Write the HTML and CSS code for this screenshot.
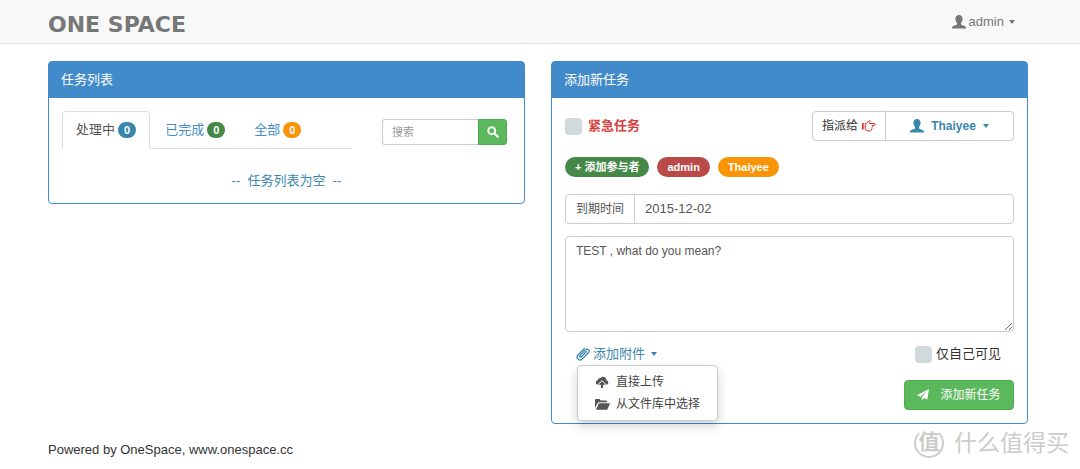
FILE: index.html
```html
<!DOCTYPE html>
<html lang="zh-CN">
<head>
<meta charset="utf-8">
<meta name="viewport" content="width=device-width, initial-scale=1">
<title>One Space</title>
<link rel="stylesheet" href="styles.css">
</head>
<body>
<svg class="sprite" aria-hidden="true">
  <symbol id="user" viewBox="0 0 14 14"><path d="M7 0c2.300 0 3.700 1.700 3.600 4-.1 1.800-.8 3-1.600 3.900v1.300c.3 1 4.800 1.400 5 3.300v1H0v-1c.2-1.900 4.700-2.300 5-3.300V7.900C4.200 7 3.500 5.800 3.400 4 3.300 1.700 4.700 0 7 0z"/></symbol>
</svg>

<header class="navbar">
  <a class="brand" href="#">ONE SPACE</a>
  <button class="account" type="button"><svg class="icon-md"><use href="#user"/></svg><span>admin</span><i class="caret"></i></button>
</header>

<main class="columns">
  <section class="panel">
    <h2 class="panel-heading">任务列表</h2>
    <div class="panel-body">
      <div class="list-bar">
        <nav class="tabs">
          <a class="tab active" href="#">处理中<span class="badge info">0</span></a>
          <a class="tab" href="#">已完成<span class="badge success">0</span></a>
          <a class="tab" href="#">全部<span class="badge warning">0</span></a>
        </nav>
        <form class="search">
          <input class="search-input" type="text" placeholder="搜索" aria-label="搜索">
          <button class="search-button" type="button" aria-label="搜索"><svg class="icon-sm" viewBox="0 0 12 12"><circle cx="4.700" cy="4.700" r="3.500" fill="none" stroke="currentColor" stroke-width="1.900"/><path d="M7.300 7.300L10.800 10.800" stroke="currentColor" stroke-width="2.200" stroke-linecap="round"/></svg></button>
        </form>
      </div>
      <p class="empty">--&nbsp; 任务列表为空 &nbsp;--</p>
    </div>
  </section>

  <section class="panel">
    <h2 class="panel-heading">添加新任务</h2>
    <form class="panel-body">
      <div class="row">
        <label class="check urgent"><input class="checkbox" type="checkbox"><span>紧急任务</span></label>
        <div class="assign">
          <button class="assign-label" type="button">指派给<svg class="hand" viewBox="0 0 14 12"><path d="M0 3h1.700v6.500H0z" fill="currentColor"/><path d="M3.200 3.500H4.500L6.700.9C7.500.2 8.600 1.200 8 2.200L7.300 3.500H12.300C13.700 3.500 13.700 5.400 12.300 5.400H10C11 6 10.700 7.100 9.900 7.400 10.500 8.100 10 9 9.300 9.200 9.500 10.300 9 10.900 8 10.900H6.200C5.200 10.900 4.500 9.800 3.200 9.800z" fill="none" stroke="currentColor" stroke-linejoin="round"/></svg></button>
          <button class="assign-user" type="button"><svg class="icon-md"><use href="#user"/></svg><span>Thaiyee</span><i class="caret"></i></button>
        </div>
      </div>
      <div class="tags">
        <button class="tag success" type="button">+ 添加参与者</button>
        <span class="tag danger">admin</span>
        <span class="tag warning">Thaiyee</span>
      </div>
      <div class="field">
        <label class="addon" for="due">到期时间</label>
        <input class="date" id="due" type="text" value="2015-12-02">
      </div>
      <textarea class="details" aria-label="任务内容">TEST , what do you mean?</textarea>
      <div class="row options">
        <div class="attach">
          <button class="attach-toggle" type="button"><svg class="icon-md clip" viewBox="0 0 14 14"><path d="M10.500 4.500L5.400 9.700C4.300 10.800 3 9.500 4 8.400L9.500 2.900C11.500.9 14.500 3.500 12.400 5.800L6.300 11.900C3.200 14.700-.6 11 2 8L8.300 1.700" fill="none" stroke="currentColor" stroke-width="1.300" stroke-linecap="round"/></svg><span>添加附件</span><i class="caret"></i></button>
          <div class="menu">
            <a class="menu-item" href="#"><svg class="menu-icon" viewBox="0 0 15 13"><path d="M3.200 9H11C14 8.800 14 5 11.600 4.400 11.500 1 7.500-.5 5.500 2 4 1.700 2.900 2.800 3 4 0 4.600.3 8.800 3.200 9z" fill="currentColor"/><path d="M7 4.600L11.600 9.200H8.500V12.700H5.500V9.200H2.400z" fill="currentColor" stroke="#fff" stroke-width="1"/></svg>直接上传</a>
            <a class="menu-item" href="#"><svg class="menu-icon" viewBox="0 0 15 13"><path d="M0 10V2Q0 1 1 1H4.300Q5 1 5.300 1.700L5.600 2.400H11Q12 2.400 12 3.400V4.200H4Q3 4.200 2.500 5.200z" fill="currentColor"/><path d="M3.900 5.200H15L12.600 11Q12.300 11.700 11.500 11.700H.9z" fill="currentColor"/></svg>从文件库中选择</a>
          </div>
        </div>
        <label class="check private"><input class="checkbox" type="checkbox"><span>仅自己可见</span></label>
      </div>
      <div class="actions">
        <button class="submit" type="button"><svg class="icon-sm" viewBox="0 0 12 12"><path d="M12 0L10.300 10.600 6.800 9.100 4.800 11.800V8.300L10.300 2 3.400 7.700 0 6.300z" fill="currentColor"/></svg><span>添加新任务</span></button>
      </div>
    </form>
  </section>
</main>

<footer class="footer">Powered by OneSpace, www.onespace.cc</footer>

<div class="watermark"><span class="seal">值</span><span>什么值得买</span></div>
</body>
</html>
```
FILE: styles.css
```css
* { box-sizing: border-box; }

body {
  margin: 0;
  background: #fff;
  color: #333;
  font: 13px/18px "Liberation Sans", "Noto Sans CJK SC", sans-serif;
}

button, input, textarea { font: inherit; color: inherit; margin: 0; }
button { cursor: pointer; }
a { text-decoration: none; color: inherit; }
svg { display: block; flex: none; fill: currentColor; }

.sprite { position: absolute; width: 0; height: 0; }
.icon-sm { width: 12px; height: 12px; }
.icon-md { width: 14px; height: 14px; }

.caret {
  border-top: 4px solid;
  border-left: 3px solid transparent;
  border-right: 3px solid transparent;
}

.navbar {
  display: flex;
  justify-content: space-between;
  align-items: center;
  height: 44px;
  padding: 0 65px 0 48px;
  background: #f8f8f8;
  border-bottom: 1px solid #e0e0e0;
}

.brand {
  padding-top: 7px;
  font: 700 22px/28px "DejaVu Sans", sans-serif;
  color: #777;
}

.account {
  display: flex;
  align-items: center;
  gap: 3px;
  padding: 0;
  border: 0;
  background: none;
  color: #777;
}

.account .caret { margin-left: 2px; }

.columns {
  display: grid;
  grid-template-columns: 1fr 1fr;
  align-items: start;
  gap: 26px;
  padding: 17px 52px 0 48px;
}

.panel { border: 1px solid #428bca; border-radius: 4px; }

.panel-heading {
  margin: 0;
  padding: 9px 12px;
  background: #428bca;
  color: #fff;
  font-size: 13px;
  font-weight: 400;
}

.panel-body { padding: 13px; }

.list-bar { display: flex; align-items: flex-start; justify-content: space-between; gap: 30px; padding-right: 4px; }

.tabs { display: flex; flex: 1; gap: 1px; border-bottom: 1px solid #ddd; }

.tab {
  display: flex;
  align-items: center;
  gap: 3px;
  height: 38px;
  padding: 0 13px;
  border: 1px solid transparent;
  margin-bottom: -1px;
  border-radius: 4px 4px 0 0;
  color: #428bca;
  white-space: nowrap;
}

.tab.active { border-color: #ddd #ddd #fff; color: #555; }

.badge {
  padding: 0 6px;
  border-radius: 8px;
  color: #fff;
  font-size: 11px;
  font-weight: 700;
  line-height: 16px;
}

.info { background: #3a87ad; }
.success { background: #468847; }
.warning { background: #f89406; }
.danger { background: #b94a48; }

.search { display: flex; width: 125px; height: 26px; margin-top: 8px; }

.search-input {
  flex: 1;
  min-width: 0;
  padding: 0 9px;
  border: 1px solid #ccc;
  border-right: 0;
  border-radius: 3px 0 0 3px;
  font-size: 11px;
}

.search-input::placeholder { color: #999; }

.search-button {
  display: flex;
  align-items: center;
  justify-content: center;
  width: 29px;
  padding: 0;
  border: 1px solid #4cae4c;
  border-radius: 0 3px 3px 0;
  background: #5cb85c;
  color: #fff;
}

.empty { margin: 23px 0 0; text-align: center; color: #3a87ad; }

.row { display: flex; justify-content: space-between; }

.check { display: flex; align-items: center; }

.checkbox {
  appearance: none;
  width: 17px;
  height: 17px;
  border-radius: 4px;
  background: #d2d9dc;
}

.urgent { gap: 6px; color: #d9403c; font-weight: 700; }

.assign { display: flex; width: 202px; height: 30px; font-size: 12px; }

.assign-label, .assign-user {
  display: flex;
  align-items: center;
  justify-content: center;
  padding: 0;
  border: 1px solid #ccc;
  background: #fff;
}

.assign-label { gap: 4px; width: 74px; border-radius: 4px 0 0 4px; }
.assign-user { flex: 1; gap: 7px; border-left: 0; border-radius: 0 4px 4px 0; color: #3a87ad; font-weight: 700; }
.hand { width: 14px; height: 12px; color: #e5312d; }

.tags { display: flex; gap: 8px; margin-top: 16px; }

.tag {
  padding: 0 10px;
  border: 0;
  border-radius: 10px;
  color: #fff;
  font-size: 11px;
  font-weight: 700;
  line-height: 20px;
}

.field { display: flex; height: 30px; margin-top: 17px; border: 1px solid #ccc; border-radius: 4px; }

.addon {
  padding: 0 10px;
  border-right: 1px solid #ccc;
  color: #555;
  font-size: 12px;
  line-height: 28px;
}

.date { flex: 1; min-width: 0; padding: 0 10px; border: 0; border-radius: 4px; background: none; color: #555; }

.details {
  display: block;
  width: 100%;
  height: 96px;
  margin-top: 12px;
  padding: 5px 10px;
  border: 1px solid #ccc;
  border-radius: 4px;
  color: #555;
  font-size: 12px;
  resize: vertical;
}

.options { align-items: center; margin-top: 13px; padding: 0 13px 0 11px; }

.attach { position: relative; }

.attach-toggle {
  display: flex;
  align-items: center;
  gap: 3px;
  padding: 0;
  border: 0;
  background: none;
  color: #3a87ad;
}

.attach-toggle .caret { margin-left: 3px; }

.menu {
  position: absolute;
  top: 20px;
  left: 1px;
  z-index: 1;
  padding: 5px 0;
  border: 1px solid #ccc;
  border-radius: 4px;
  background: #fff;
  box-shadow: 0 5px 11px rgba(0, 0, 0, .18);
  font-size: 12px;
  color: #444;
}

.menu-item { display: flex; align-items: center; gap: 6px; padding: 2px 17px; white-space: nowrap; }
.menu-icon { width: 15px; height: 13px; color: #555; }

.private { gap: 4px; }

.actions { display: flex; justify-content: flex-end; margin-top: 17px; }

.submit {
  display: flex;
  align-items: center;
  justify-content: center;
  gap: 11px;
  width: 110px;
  height: 30px;
  padding: 0;
  border: 1px solid #4cae4c;
  border-radius: 4px;
  background: #5cb85c;
  color: #fff;
  font-size: 12px;
}

.footer { padding: 17px 48px; }

.watermark {
  position: absolute;
  right: 11px;
  bottom: 11px;
  display: flex;
  align-items: center;
  gap: 10px;
  color: #ccc;
  font-size: 23px;
  line-height: 30px;
}

.seal {
  width: 30px;
  height: 30px;
  border: 2px solid #ccc;
  border-top-color: transparent;
  border-radius: 50%;
  font-size: 21px;
  font-weight: 700;
  line-height: 24px;
  text-align: center;
}
```
